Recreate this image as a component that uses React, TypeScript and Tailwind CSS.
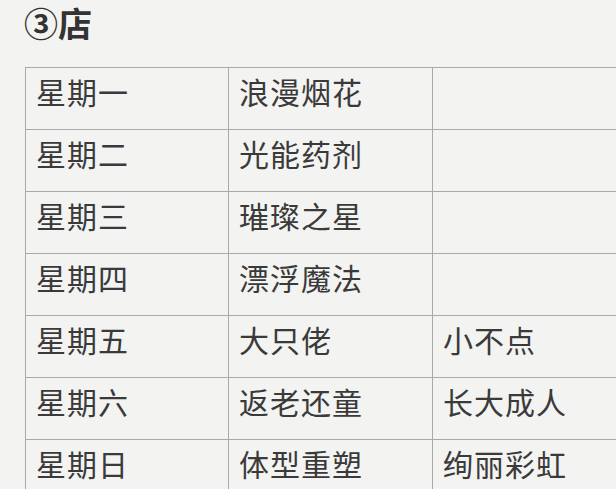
import React from "react";

const rows: [string, string, string][] = [
  ["星期一", "浪漫烟花", ""],
  ["星期二", "光能药剂", ""],
  ["星期三", "璀璨之星", ""],
  ["星期四", "漂浮魔法", ""],
  ["星期五", "大只佬", "小不点"],
  ["星期六", "返老还童", "长大成人"],
  ["星期日", "体型重塑", "绚丽彩虹"],
];

const App: React.FC = () => {
  return (
    <div
      className="h-[489px] w-[616px] overflow-hidden bg-[#f3f3f1] text-[#3a3a3a]"
      style={{ fontFamily: '"Noto Sans CJK SC", "Noto Sans", sans-serif' }}
    >
      <h1 className="ml-[24px] pt-[1px] text-[34px] font-bold leading-[44px] text-[#333]">
        ③店
      </h1>
      <div className="ml-[25px] mt-[22px] grid w-[612px] grid-cols-[203px_204px_205px] border-l border-t border-[#a9a9a9]">
        {rows.map((row, i) => (
          <React.Fragment key={i}>
            {row.map((cell, j) => (
              <div
                key={j}
                className="h-[62px] border-b border-r border-[#a9a9a9] pl-[10px] pt-[3px] text-[30px] leading-[40px] tracking-[1px]"
              >
                {cell}
              </div>
            ))}
          </React.Fragment>
        ))}
      </div>
    </div>
  );
};

export default App;
